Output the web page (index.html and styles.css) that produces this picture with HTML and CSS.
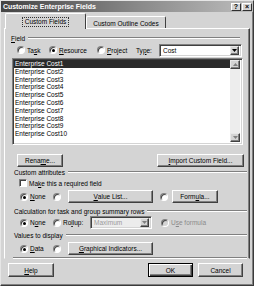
FILE: index.html
```html
<!DOCTYPE html>
<html>
<head>
<meta charset="utf-8">
<link rel="stylesheet" href="styles.css">
</head>
<body>
<div class="dlg">
  <div class="titlebar">
    <span class="title">Customize Enterprise Fields</span>
    <span class="tbtns"><span class="tbtn">?</span><span class="tbtn">×</span></span>
  </div>
  <div class="tabs">
    <div class="tab active"><span class="focus">Custom Fields</span></div>
    <div class="tab">Custom Outline Codes</div>
  </div>
  <div class="panel">
    <div class="grp g-field"><span><u>F</u>ield</span></div>
    <div class="row r-field">
      <label class="opt w-task"><span class="rad"></span>Ta<u>s</u>k</label>
      <label class="opt w-res"><span class="rad on"></span><u>R</u>esource</label>
      <label class="opt w-proj"><span class="rad"></span><u>P</u>roject</label>
      <span class="typelbl">Ty<u>p</u>e:</span>
      <div class="combo c-type"><span class="txt">Cost</span><span class="dd"><svg width="5" height="3" viewBox="0 0 5 3"><path d="M0 0h5L2.5 3z"/></svg></span></div>
    </div>
    <div class="listbox">
      <div class="items">
        <div class="item sel">Enterprise Cost1</div>
        <div class="item">Enterprise Cost2</div>
        <div class="item">Enterprise Cost3</div>
        <div class="item">Enterprise Cost4</div>
        <div class="item">Enterprise Cost5</div>
        <div class="item">Enterprise Cost6</div>
        <div class="item">Enterprise Cost7</div>
        <div class="item">Enterprise Cost8</div>
        <div class="item">Enterprise Cost9</div>
        <div class="item">Enterprise Cost10</div>
      </div>
      <div class="sbar">
        <span class="sbtn"><svg width="5" height="3" viewBox="0 0 5 3"><path d="M0 3h5L2.5 0z" fill="#808080"/></svg></span>
        <span class="sbtn"><svg width="5" height="3" viewBox="0 0 5 3"><path d="M0 0h5L2.5 3z" fill="#808080"/></svg></span>
      </div>
    </div>
    <div class="row r-btns">
      <span class="btn b-rename">Rena<u>m</u>e...</span>
      <span class="btn b-import"><u>I</u>mport Custom Field...</span>
    </div>
    <div class="grp g-sub g-attr"><span>Custom attributes</span></div>
    <div class="row r-check">
      <label class="opt"><span class="chk"></span>Ma<u>k</u>e this a required field</label>
    </div>
    <div class="row r-attr">
      <label class="opt w-none"><span class="rad on"></span><u>N</u>one</label>
      <label class="opt w-r2"><span class="rad"></span></label>
      <span class="btn b-wide"><u>V</u>alue List...</span>
      <label class="opt w-r3"><span class="rad"></span></label>
      <span class="btn b-formula">Form<u>u</u>la...</span>
    </div>
    <div class="grp g-sub g-calc"><span>Calculation for task and group summary rows</span></div>
    <div class="row r-calc">
      <label class="opt w-none"><span class="rad on"></span>N<u>o</u>ne</label>
      <label class="opt w-rollup"><span class="rad"></span>Ro<u>l</u>lup:</label>
      <div class="combo c-max dis"><span class="txt">Maximum</span><span class="dd"><svg width="5" height="3" viewBox="0 0 5 3"><path d="M0 0h5L2.5 3z" fill="#808080"/></svg></span></div>
      <label class="opt dis w-usef"><span class="rad dis"></span>U<u>s</u>e formula</label>
    </div>
    <div class="grp g-sub g-vals"><span>Values to display</span></div>
    <div class="row r-vals">
      <label class="opt w-none"><span class="rad on"></span><u>D</u>ata</label>
      <label class="opt w-r2"><span class="rad"></span></label>
      <span class="btn b-wide"><u>G</u>raphical Indicators...</span>
    </div>
    <div class="sep"></div>
  </div>
  <div class="footer">
    <span class="btn b-help"><u>H</u>elp</span>
    <span class="btn b-ok def">OK</span>
    <span class="btn b-cancel">Cancel</span>
  </div>
</div>
</body>
</html>
```
FILE: styles.css
```css
* { box-sizing: border-box; }
html, body { margin: 0; padding: 0; }
body {
  width: 254px;
  height: 286px;
  overflow: hidden;
  background: #d4d4d4;
  font-family: "Liberation Sans", Arial, sans-serif;
  font-size: 6.5px;
  color: #000;
}
u { text-decoration: underline; text-underline-offset: 1px; }
.dlg {
  width: 254px;
  height: 286px;
  border: 1px solid;
  border-color: #e6e6e6 #3a3a3a #3a3a3a #e6e6e6;
  box-shadow: inset -1px -1px #808080;
  background: #d4d4d4;
  display: flex;
  flex-direction: column;
}
.titlebar {
  height: 11px;
  flex: none;
  background: linear-gradient(90deg, #444 0%, #8a8a8a 55%, #bdbdbd 100%);
  display: flex;
  align-items: center;
  justify-content: space-between;
  padding: 0 1px 0 2px;
}
.title { color: #fff; font-weight: bold; font-size: 7px; letter-spacing: -0.05px; }
.tbtns { display: flex; gap: 1px; }
.tbtn {
  width: 10px;
  height: 8px;
  background: #d4d4d4;
  border: 1px solid;
  border-color: #fff #303030 #303030 #fff;
  font-size: 7px;
  font-weight: bold;
  line-height: 6px;
  display: flex;
  align-items: center;
  justify-content: center;
}
.tabs {
  height: 15px;
  flex: none;
  margin-top: 1px;
  padding-left: 4px;
  display: flex;
  align-items: flex-start;
  position: relative;
  z-index: 1;
}
.tab {
  width: 80px;
  height: 12px;
  margin-top: 3px;
  background: #d4d4d4;
  border: 1px solid;
  border-color: #fff #404040 transparent #fff;
  border-bottom: none;
  border-radius: 2px 2px 0 0;
  display: flex;
  align-items: center;
  justify-content: center;
  padding-top: 1px;
}
.tab.active { width: 81px; height: 16px; margin-top: 0; padding-top: 0; }
.focus { border: 1px dotted #333; padding: 0 2px; line-height: 8px; height: 10px; display: flex; align-items: center; }
.panel {
  height: 231px;
  flex: none;
  margin: 0 3px;
  border: 1px solid;
  border-color: #fff #404040 transparent #fff;
  box-shadow: inset -1px 0 #808080;
  padding: 0 0 0 6px;
  display: flex;
  flex-direction: column;
}
.grp { display: flex; align-items: center; height: 8px; flex: none; white-space: nowrap; }
.grp::after {
  content: "";
  flex: 1;
  border-top: 1px solid #808080;
  border-bottom: 1px solid #fff;
  margin-left: 3px;
}
.g-field { margin-top: 5px; }
.g-field::after { margin-right: 9px; }
.g-sub { margin-left: 3px; }
.g-sub::after { margin-right: 2px; }
.g-attr { margin-top: 1px; }
.g-calc { margin-top: 4px; }
.g-vals { margin-top: 2px; }
.row { display: flex; align-items: center; flex: none; white-space: nowrap; }
.opt { display: flex; align-items: center; flex: none; }
.rad {
  width: 8px;
  height: 8px;
  border-radius: 50%;
  background: #fff;
  border: 1px solid;
  border-color: #808080 #fff #fff #808080;
  box-shadow: inset 1px 1px #404040;
  position: relative;
  flex: none;
  margin-right: 2px;
}
.rad.on::after {
  content: "";
  position: absolute;
  left: 2px;
  top: 2px;
  width: 3px;
  height: 3px;
  border-radius: 50%;
  background: #000;
}
.rad.dis { background: #d4d4d4; }
.opt.dis { color: #8a8a8a; }
.chk {
  width: 8px;
  height: 8px;
  background: #fff;
  border: 1px solid;
  border-color: #808080 #fff #fff #808080;
  box-shadow: inset 1px 1px #404040;
  flex: none;
  margin-right: 2px;
}
.r-field { height: 12px; margin-top: 2px; }
.w-task { width: 32px; margin-left: 6px; }
.w-res { width: 48px; }
.w-proj { width: 39px; }
.typelbl { width: 23px; }
.combo {
  height: 13px;
  background: #fff;
  border: 1px solid;
  border-color: #808080 #fff #fff #808080;
  box-shadow: inset 1px 1px #404040, inset -1px -1px #d4d4d4;
  display: flex;
  align-items: center;
  padding: 2px 2px 2px 3px;
  flex: none;
}
.combo .txt { flex: 1; }
.combo.dis { background: #ececec; color: #9a9a9a; }
.dd, .sbtn {
  width: 9px;
  height: 9px;
  background: #d4d4d4;
  border: 1px solid;
  border-color: #e8e8e8 #404040 #404040 #e8e8e8;
  box-shadow: inset -1px -1px #808080;
  display: flex;
  align-items: center;
  justify-content: center;
  flex: none;
}
.c-type { width: 83px; }
.listbox {
  width: 231px;
  height: 87px;
  margin: 2px 0 0 1px;
  flex: none;
  background: #fff;
  border: 1px solid;
  border-color: #808080 #fff #fff #808080;
  box-shadow: inset 1px 1px #404040, inset -1px -1px #d4d4d4;
  padding: 1px 1px 1px 1px;
  display: flex;
}
.items { flex: 1; padding-top: 0; }
.item { height: 7.8px; line-height: 7.8px; padding-left: 1px; white-space: nowrap; }
.item.sel { background: #2a2a2a; color: #fff; }
.sbar {
  width: 10px;
  background: #ededed;
  display: flex;
  flex-direction: column;
  justify-content: space-between;
  margin: 0 1px 1px 0;
}
.sbar .sbtn { width: 10px; height: 9px; }
.btn {
  height: 13px;
  background: #d4d4d4;
  border: 1px solid;
  border-color: #fff #404040 #404040 #fff;
  box-shadow: inset -1px -1px #808080;
  display: flex;
  align-items: center;
  justify-content: center;
  flex: none;
  white-space: nowrap;
}
.btn.def {
  border: 1px solid #000;
  box-shadow: inset 1px 1px #fff, inset -1px -1px #404040, inset -2px -2px #808080;
}
.r-btns { height: 13px; margin-top: 9px; justify-content: space-between; padding-right: 5px; }
.b-rename { width: 46px; margin-left: 6px; }
.b-import { width: 87px; }
.r-check { height: 10px; margin-top: 2px; padding-left: 8px; }
.r-attr { height: 13px; margin-top: 2px; }
.w-none { width: 33px; margin-left: 9px; }
.w-r2 { width: 15px; }
.b-wide { width: 85px; }
.w-r3 { width: 12px; margin-left: 7px; }
.b-formula { width: 46px; }
.r-calc { height: 13px; margin-top: 1px; }
.w-rollup { width: 37px; }
.c-max { width: 62px; }
.w-usef { margin-left: 9px; }
.r-vals { height: 13px; margin-top: 3px; }
.sep {
  height: 2px;
  margin: 2px 2px 0 2px;
  border-top: 1px solid #808080;
  border-bottom: 1px solid #fff;
  flex: none;
}
.footer { display: flex; align-items: flex-start; margin-top: 4px; padding-left: 7px; }
.footer .btn { height: 14px; }
.b-help { width: 46px; }
.b-ok { width: 45px; margin-left: 94px; }
.b-cancel { width: 45px; margin-left: 5px; }
```
